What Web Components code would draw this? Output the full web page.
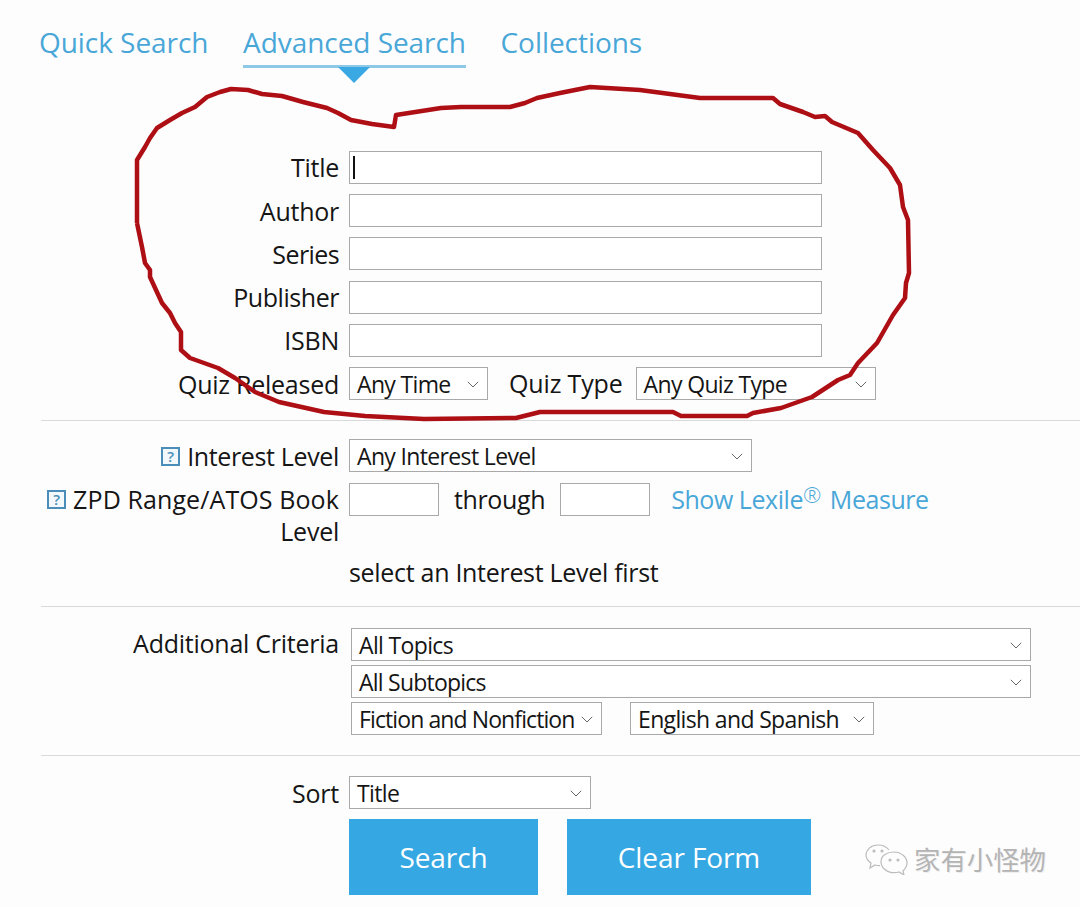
<!DOCTYPE html>
<html lang="en">
<head>
<meta charset="utf-8">
<title>Advanced Search</title>
<style>
  html, body { margin: 0; height: 907px; overflow: hidden; background: #fefdfe; }
  body { position: relative; font-family: "Open Sans", "Noto Sans", "Liberation Sans", sans-serif; color: #151515; }
  #page { display: block; padding-left: 41px; }
</style>
</head>
<body>
<div id="page">
  <search-tabs>
    <search-tab>Quick Search</search-tab>
    <search-tab active>Advanced Search</search-tab>
    <search-tab>Collections</search-tab>
  </search-tabs>

  <form-section style="--pad-top:0px;--pad-bottom:19.4px" first>
    <form-row><span slot="label">Title</span><text-field caret style="width:473px"></text-field></form-row>
    <form-row><span slot="label">Author</span><text-field style="width:473px"></text-field></form-row>
    <form-row><span slot="label" style="letter-spacing:-.6px">Series</span><text-field style="width:473px"></text-field></form-row>
    <form-row><span slot="label" style="letter-spacing:-.45px">Publisher</span><text-field style="width:473px"></text-field></form-row>
    <form-row><span slot="label">ISBN</span><text-field style="width:473px"></text-field></form-row>
    <form-row>
      <span slot="label">Quiz Released</span>
      <select-box style="width:139px">Any Time</select-box>
      <span style="margin:0 13px 0 21px;letter-spacing:-.15px">Quiz Type</span>
      <select-box style="width:240px">Any Quiz Type</select-box>
    </form-row>
  </form-section>

  <form-section style="--pad-top:18.6px;--pad-bottom:17.5px">
    <form-row><span slot="label"><help-icon></help-icon><span style="letter-spacing:-.35px">Interest Level</span></span><select-box style="width:403px">Any Interest Level</select-box></form-row>
    <form-row>
      <span slot="label"><help-icon></help-icon><span style="letter-spacing:.1px">ZPD Range/ATOS Book</span> Level</span>
      <text-field style="width:90px"></text-field>
      <span style="margin:0 15px;letter-spacing:-.37px">through</span>
      <text-field style="width:90px"></text-field>
      <a-link style="margin-left:21px">Show Lexile<sup>®</sup>Measure</a-link>
    </form-row>
    <form-row style="margin-top:-1.4px"><span style="letter-spacing:-.3px">select an Interest Level first</span></form-row>
  </form-section>

  <form-section style="--pad-top:21px;--pad-bottom:20px">
    <form-row>
      <span slot="label" style="display:block;margin-top:-2px">Additional Criteria</span>
      <field-stack>
        <select-box style="width:680px">All Topics</select-box>
        <select-box style="width:680px;letter-spacing:-.77px">All Subtopics</select-box>
        <div style="display:flex;gap:28px">
          <select-box style="width:251px;letter-spacing:-.9px">Fiction and Nonfiction</select-box>
          <select-box style="width:244px">English and Spanish</select-box>
        </div>
      </field-stack>
    </form-row>
  </form-section>

  <form-section style="--pad-top:19.6px;--pad-bottom:0px">
    <form-row><span slot="label">Sort</span><select-box style="width:242px">Title</select-box></form-row>
    <form-row>
      <action-button style="width:189px">Search</action-button>
      <action-button style="width:244px;margin-left:29px">Clear Form</action-button>
    </form-row>
  </form-section>
</div>

<wechat-mark>家有小怪物</wechat-mark>
<hand-circle></hand-circle>

<script>
  class SearchTabs extends HTMLElement {
    constructor() {
      super();
      this.attachShadow({ mode: 'open' }).innerHTML = `
        <style>
          :host { display: flex; gap: 34.5px; margin-left: -2px; padding-top: 24px; box-sizing: border-box; height: 150.8px; }
        </style>
        <slot></slot>
      `;
    }
  }
  customElements.define('search-tabs', SearchTabs);

  class SearchTab extends HTMLElement {
    constructor() {
      super();
      this.attachShadow({ mode: 'open' }).innerHTML = `
        <style>
          :host { display: block; position: relative; height: 41px; line-height: 36px; font-size: 28px; letter-spacing: -0.05px; color: #49a7d8; white-space: nowrap; }
          :host([active]) { border-bottom: 3px solid #8dc9e7; }
          :host([active])::after {
            content: ""; position: absolute; left: 50%; top: 43px; margin-left: -16.5px;
            border-top: 16px solid #3aa8e2; border-left: 16.5px solid transparent; border-right: 16.5px solid transparent;
          }
        </style>
        <slot></slot>
      `;
    }
  }
  customElements.define('search-tab', SearchTab);

  class FormSection extends HTMLElement {
    constructor() {
      super();
      this.attachShadow({ mode: 'open' }).innerHTML = `
        <style>
          :host {
            display: flex; flex-direction: column; row-gap: 10.3px;
            padding: var(--pad-top) 0 var(--pad-bottom);
            border-top: 1px solid #d9d9d9;
          }
          :host([first]) { border-top: 0; }
        </style>
        <slot></slot>
      `;
    }
  }
  customElements.define('form-section', FormSection);

  class FormRow extends HTMLElement {
    constructor() {
      super();
      this.attachShadow({ mode: 'open' }).innerHTML = `
        <style>
          :host { display: flex; align-items: flex-start; line-height: 33px; font-size: 25px; letter-spacing: -0.25px; white-space: nowrap; }
          .label { flex: 0 0 298px; margin-right: 10px; text-align: right; white-space: normal; line-height: 32px; padding-top: .5px; }
          .fields { display: flex; align-items: flex-start; }
        </style>
        <div class="label"><slot name="label"></slot></div>
        <div class="fields"><slot></slot></div>
      `;
    }
  }
  customElements.define('form-row', FormRow);

  class TextField extends HTMLElement {
    constructor() {
      super();
      this.attachShadow({ mode: 'open' }).innerHTML = `
        <style>
          :host { display: block; position: relative; height: 33px; box-sizing: border-box; border: 1px solid #a9a9a9; background: #fff; }
          :host([caret])::after { content: ""; position: absolute; left: 3px; top: 4px; width: 1.5px; height: 23px; background: #111; }
        </style>
      `;
    }
  }
  customElements.define('text-field', TextField);

  class SelectBox extends HTMLElement {
    constructor() {
      super();
      this.attachShadow({ mode: 'open' }).innerHTML = `
        <style>
          :host {
            display: flex; align-items: center; justify-content: space-between; flex: none;
            height: 33px; box-sizing: border-box; padding: 1px 8px 0 7px;
            border: 1px solid #a9a9a9; background: #fff; line-height: 30px;
            font-size: 23px; letter-spacing: -0.65px;
          }
          svg { flex: none; width: 12px; height: 7px; }
        </style>
        <span><slot></slot></span>
        <svg viewBox="0 0 12 7"><path d="M.8.8 6 6 11.2.8" fill="none" stroke="#666" stroke-width="1"/></svg>
      `;
    }
  }
  customElements.define('select-box', SelectBox);

  class FieldStack extends HTMLElement {
    constructor() {
      super();
      this.attachShadow({ mode: 'open' }).innerHTML = `
        <style>
          :host { display: flex; flex-direction: column; gap: 4px; margin-left: 2px; }
        </style>
        <slot></slot>
      `;
    }
  }
  customElements.define('field-stack', FieldStack);

  class HelpIcon extends HTMLElement {
    constructor() {
      super();
      this.attachShadow({ mode: 'open' }).innerHTML = `
        <style>
          :host {
            display: inline-block; overflow: hidden; width: 19px; height: 19px; box-sizing: border-box; margin-right: 7px; vertical-align: 0;
            border: 2px solid #4a8db8; background: #f2f8fc; color: #4a8db8;
            font-size: 15px; font-weight: 600; line-height: 15px; text-align: center; letter-spacing: 0;
          }
        </style>
        ?
      `;
    }
  }
  customElements.define('help-icon', HelpIcon);

  class ALink extends HTMLElement {
    constructor() {
      super();
      this.attachShadow({ mode: 'open' }).innerHTML = `
        <style>
          :host { display: inline-block; color: #49a7d8; letter-spacing: -0.45px; }
          ::slotted(sup) { font-size: 22px; font-weight: 300; line-height: 0; vertical-align: 6px; margin-right: 9px; }
        </style>
        <slot></slot>
      `;
    }
  }
  customElements.define('a-link', ALink);

  class ActionButton extends HTMLElement {
    constructor() {
      super();
      this.attachShadow({ mode: 'open' }).innerHTML = `
        <style>
          :host { display: flex; align-items: center; justify-content: center; height: 76px; background: #35a8e3; color: #fff; font-size: 28px; letter-spacing: -0.1px; }
        </style>
        <slot></slot>
      `;
    }
  }
  customElements.define('action-button', ActionButton);

  class WechatMark extends HTMLElement {
    constructor() {
      super();
      this.attachShadow({ mode: 'open' }).innerHTML = `
        <style>
          :host {
            position: absolute; left: 865px; top: 842px; display: flex; align-items: center; gap: 5px;
            font-family: "Noto Sans CJK SC", sans-serif; font-size: 26.4px; line-height: 34px; color: #b4b4b4;
            text-shadow: 1px 1px 0 #eee;
          }
          svg { width: 44px; height: 32px; }
        </style>
        <svg viewBox="0 0 44 32" fill="none" stroke="#bcbcbc" stroke-width="1.2">
          <path d="M24 7C21 3 17 2 13 2 6 2 1 7 1 12c0 3 2 6 5 8l-1 5 5-3c2 .5 3 .6 5 .6"/>
          <path d="M29 9c7 0 13 5 13 11 0 3-2 6-4 8l1 4-5-3c-2 .6-3 .7-5 .7-7 0-13-5-13-11S22 9 29 9Z"/>
          <circle cx="9" cy="8" r="1" fill="#bcbcbc"/><circle cx="17" cy="8" r="1" fill="#bcbcbc"/>
          <circle cx="25" cy="17" r="1" fill="#bcbcbc"/><circle cx="33" cy="17" r="1" fill="#bcbcbc"/>
        </svg>
        <slot></slot>
      `;
    }
  }
  customElements.define('wechat-mark', WechatMark);

  // the red pen circle drawn over the form
  class HandCircle extends HTMLElement {
    constructor() {
      super();
      const points = [
        [137,223],[137,160],[145,147],[150,138],[157,128],[170,120],[182,113],[195,107],[207,97],[220,92],[231,89],[248,90],
        [262,94],[282,96],[303,102],[327,108],[338,113],[351,120],[372,124],[394,127],[396,115],[441,108],[461,107],[510,107],
        [525,103],[537,98],[560,93],[590,87],[640,90],[700,98],[773,98],[780,104],[803,112],[815,117],[825,116],[832,122],
        [858,133],[873,150],[890,168],[900,185],[903,207],[908,220],[909,273],[906,283],[905,298],[893,315],[877,343],
        [858,363],[850,375],[838,380],[812,397],[781,408],[753,413],[747,416],[681,416],[673,412],[540,412],[516,418],
        [424,419],[365,416],[324,412],[279,402],[255,392],[235,378],[218,368],[190,358],[181,350],[181,332],[175,323],
        [170,313],[162,303],[150,277],[150,270],[145,263],[142,247],[137,223]
      ];
      this.attachShadow({ mode: 'open' }).innerHTML = `
        <style>
          :host { position: absolute; inset: 0; pointer-events: none; }
          svg { display: block; }
        </style>
        <svg width="1080" height="907" viewBox="0 0 1080 907">
          <polyline points="${points.join(' ')}" fill="none" stroke="#ad0f14" stroke-width="4.5" stroke-linejoin="round"/>
        </svg>
      `;
    }
  }
  customElements.define('hand-circle', HandCircle);
</script>
</body>
</html>
